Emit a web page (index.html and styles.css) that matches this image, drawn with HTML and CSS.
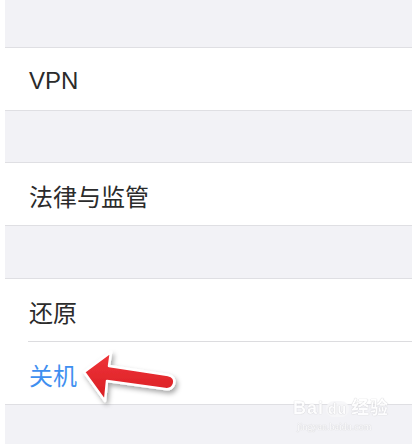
FILE: index.html
```html
<!DOCTYPE html>
<html lang="zh-CN">
<head>
  <meta charset="UTF-8">
  <title>通用</title>
  <link rel="stylesheet" href="styles.css">
</head>
<body>
  <div class="settings">
    <div class="gap gap-top"></div>
    <ul class="group">
      <li class="cell">VPN</li>
    </ul>
    <div class="gap"></div>
    <ul class="group">
      <li class="cell">法律与监管</li>
    </ul>
    <div class="gap gap-wide"></div>
    <ul class="group">
      <li class="cell">还原</li>
      <li class="cell cell-action">关机</li>
    </ul>
    <div class="gap gap-bottom">
      <div class="watermark">
        <div class="watermark-logo">Bai<span class="watermark-paw">du</span>经验</div>
        <div class="watermark-url">jingyan.baidu.com</div>
      </div>
    </div>

    <svg class="arrow" width="110" height="70" viewBox="0 0 110 70">
      <defs>
        <linearGradient id="arrow_fill" x1="0" y1="0" x2="0" y2="1">
          <stop offset="0" stop-color="#f0363a"/>
          <stop offset="1" stop-color="#d81d22"/>
        </linearGradient>
        <filter id="arrow_shadow" x="-20%" y="-20%" width="140%" height="150%">
          <feDropShadow dx="2" dy="3" stdDeviation="2.5" flood-color="#000" flood-opacity="0.35"/>
        </filter>
      </defs>
      <path d="M4 27 L31 7 L29 21 L88 30 Q96 32 94 39 Q92 45 85 44 L27 36 L25 56 Z"
            fill="url(#arrow_fill)" stroke="#fff" stroke-width="2.5" stroke-linejoin="round"
            filter="url(#arrow_shadow)"/>
    </svg>
  </div>
</body>
</html>
```

FILE: styles.css
```css
* {
  margin: 0;
  padding: 0;
  list-style: none;
}

html, body {
  background: #fff;
}

body {
  font-family: "Liberation Sans", "Noto Sans CJK SC", sans-serif;
}

.settings {
  position: relative;
  margin-left: 5px;
  height: 444px;
  background: #f2f2f6;
  overflow: hidden;
}

.gap {
  height: 51px;
  background: #f2f2f6;
}

.gap-top {
  height: 47px;
}

.gap-wide {
  height: 52px;
}

.gap-bottom {
  height: 40px;
  position: relative;
}

.group {
  background: #fff;
  border-top: 1px solid #dfdfe3;
  border-bottom: 1px solid #dfdfe3;
}

.cell {
  height: 62px;
  display: flex;
  align-items: center;
  padding: 3px 0 0 24px;
  box-sizing: border-box;
  font-size: 24px;
  color: #2b2b2b;
}

.cell + .cell {
  border-top: 1px solid #dcdcdf;
  margin-left: 23px;
  padding-left: 1px;
  height: 63px;
}

.cell-action {
  color: #3f8ff0;
}

.arrow {
  position: absolute;
  left: 75px;
  top: 345px;
}

.watermark {
  position: absolute;
  left: 288px;
  top: -12px;
  color: #fff;
  text-shadow: 0 0 1px #c8c8cc, 0 0 1px #c8c8cc;
  opacity: 0.9;
}

.watermark-logo {
  font-size: 18px;
  font-weight: bold;
  letter-spacing: 1px;
}

.watermark-paw {
  display: inline-block;
  margin: 0 2px;
  padding: 0 2px;
  font-size: 14px;
  border-radius: 8px;
  background: #f7f7f9;
  color: #fff;
}

.watermark-url {
  font-family: "Liberation Serif", serif;
  font-size: 10px;
  margin-top: 2px;
  padding-left: 4px;
}
```
